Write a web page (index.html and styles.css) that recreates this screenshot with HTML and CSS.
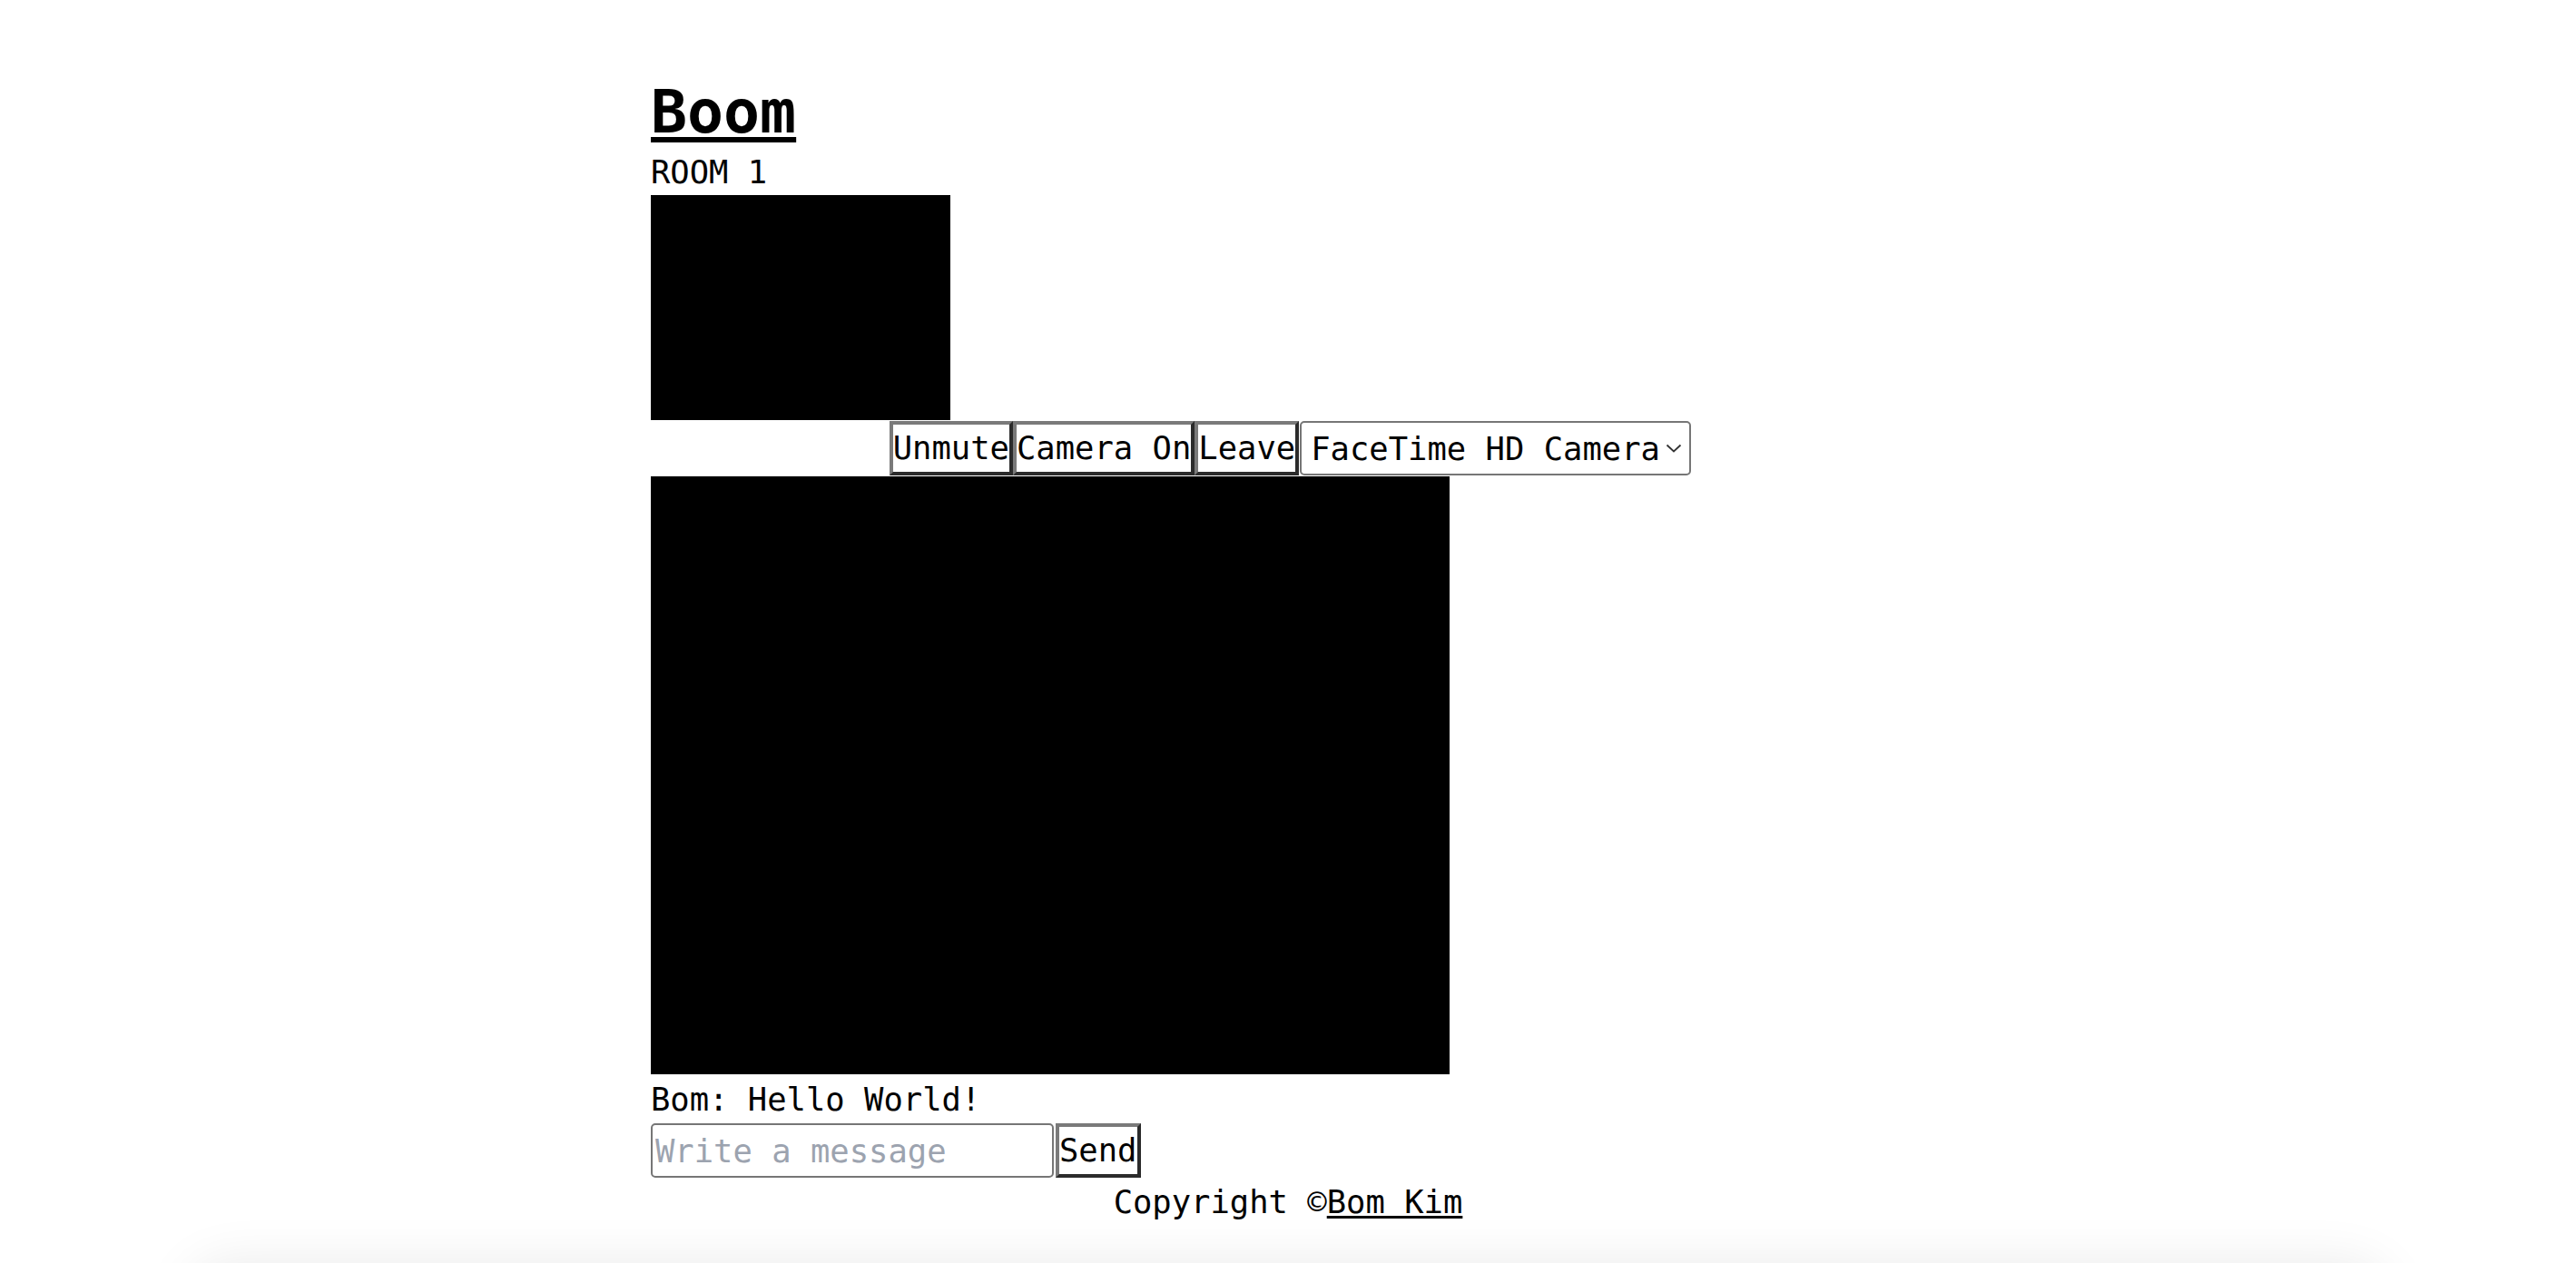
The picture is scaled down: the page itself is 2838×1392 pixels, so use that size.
FILE: index.html
```html
<!DOCTYPE html>
<html lang="en">
<head>
<meta charset="utf-8">
<title>Boom</title>
<link rel="stylesheet" href="styles.css">
</head>
<body>
<div class="page">
  <header class="header">
    <h1 class="title"><a href="#" class="title-link">Boom</a></h1>
  </header>
  <main class="main">
    <div class="room-name">ROOM 1</div>
    <video class="my-face" muted></video>
    <div class="controls">
      <button class="btn">Unmute</button><button class="btn">Camera On</button><button class="btn">Leave</button><span class="select-wrap"><select class="camera-select"><option>FaceTime HD Camera</option></select><svg class="chevron" width="18" height="10" viewBox="0 0 18 10"><path d="M1.5 1.5 L9 8.5 L16.5 1.5" fill="none" stroke="#333" stroke-width="1.8"/></svg></span>
    </div>
    <video class="peer-face" muted></video>
    <ul class="messages">
      <li class="message">Bom: Hello World!</li>
    </ul>
    <form class="chat-form">
      <input class="chat-input" type="text" placeholder="Write a message"><button class="btn send-btn" type="button">Send</button>
    </form>
  </main>
  <footer class="footer">Copyright ©<a href="#" class="footer-link">Bom Kim</a></footer>
  <div class="shade"></div>
</div>
</body>
</html>
```
FILE: styles.css
```css
html, body {
  margin: 0;
  padding: 0;
  overflow: hidden;
  background: #fff;
}

body {
  font-family: "DejaVu Sans Mono", monospace;
  font-size: 35.5px;
  line-height: 41px;
  color: #000;
}

.page {
  width: 1404px;
  margin: 0 auto;
  padding-top: 85px;
}

.title {
  margin: 0;
  font-size: 66.5px;
  line-height: 76px;
  font-weight: bold;
}

.title-link {
  color: #000;
  text-decoration: underline;
  text-decoration-thickness: 6px;
  text-underline-offset: 5px;
}

.room-name {
  margin-top: 8px;
}

.my-face {
  display: block;
  margin-top: 5px;
  width: 330px;
  height: 248px;
  background: #000;
}

.controls {
  display: flex;
  justify-content: center;
  align-items: center;
  height: 62px;
  padding-left: 5px;
}

.btn {
  font-family: "DejaVu Sans Mono", monospace;
  font-size: 35.5px;
  line-height: 42px;
  color: #000;
  background: #fff;
  padding: 5px 0;
  margin: 0;
  border-width: 4px;
  border-style: solid;
  border-color: #7a7a7a #2b2b2b #2b2b2b #7a7a7a;
  border-radius: 0;
}

.select-wrap {
  position: relative;
  display: inline-block;
  margin-left: 1px;
}

.camera-select {
  appearance: none;
  -webkit-appearance: none;
  font-family: "DejaVu Sans Mono", monospace;
  font-size: 35.5px;
  line-height: 41px;
  color: #000;
  background: #fff;
  width: 431px;
  height: 60px;
  padding: 0 28px 0 10px;
  margin: 0;
  border: 2px solid #767676;
  border-radius: 5px;
}

.chevron {
  position: absolute;
  right: 10px;
  top: 25px;
  pointer-events: none;
}

.peer-face {
  display: block;
  width: 880px;
  height: 659px;
  background: #000;
}

.messages {
  list-style: none;
  margin: 7px 0 0;
  padding: 0;
}

.chat-form {
  display: flex;
  align-items: center;
  gap: 2px;
  margin: 6px 0 0;
}

.chat-input {
  font-family: "DejaVu Sans Mono", monospace;
  font-size: 35.5px;
  line-height: 41px;
  width: 444px;
  height: 60px;
  box-sizing: border-box;
  padding: 0 3px;
  margin: 0;
  border: 2px solid #767676;
  border-radius: 5px;
  color: #000;
}

.chat-input::placeholder {
  color: #9ca3af;
}

.send-btn {
  height: 60px;
}

.footer {
  margin-top: 6px;
  text-align: center;
}

.footer-link {
  color: #000;
  text-decoration: underline;
  text-decoration-thickness: 3px;
  text-underline-offset: 3px;
}

.shade {
  width: 2420px;
  margin: 55px 0 0 -508px;
  height: 120px;
  border-radius: 40px;
  background: #fff;
  box-shadow: 0 -6px 60px rgba(0, 0, 0, 0.09);
}
```
